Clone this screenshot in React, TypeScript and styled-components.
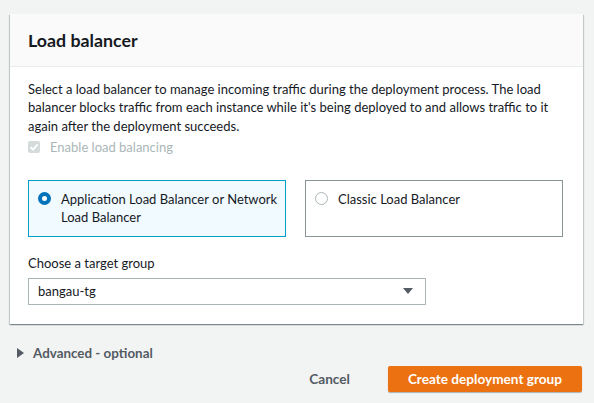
import React, { useState } from 'react';
import styled, { createGlobalStyle } from 'styled-components';

const GlobalStyle = createGlobalStyle`
  html, body {
    margin: 0;
    padding: 0;
    background: #f2f3f3;
    font-family: Lato, "Liberation Sans", Arial, sans-serif;
    font-size: 13px;
    color: #16191f;
  }
`;

const Page = styled.div`
  width: 594px;
  height: 403px;
  padding: 14px 0 0 10px;
  box-sizing: border-box;
  overflow: hidden;
`;

const Panel = styled.section`
  width: 573px;
  background: #ffffff;
  box-shadow: 0 1px 1px 0 rgba(0, 28, 36, 0.3), 1px 1px 1px 0 rgba(0, 28, 36, 0.15),
    -1px 1px 1px 0 rgba(0, 28, 36, 0.15);
`;

const PanelHeader = styled.header`
  height: 52px;
  display: flex;
  align-items: center;
  padding: 0 20px 0 18px;
  background: #fafafa;
  border-bottom: 1px solid #eaeded;
`;

const PanelTitle = styled.h2`
  margin: 0 0 1px;
  font-size: 17.8px;
  font-weight: 700;
  line-height: 22px;
  color: #16191f;
`;

const PanelBody = styled.div`
  padding: 13px 20px 19px 18px;
`;

const Description = styled.p`
  margin: 0;
  line-height: 18.3px;
`;

const CheckRow = styled.label`
  display: flex;
  align-items: center;
  gap: 10px;
  margin-top: 3px;
  height: 18px;
  color: #aab7b8;
`;

const CheckBox = styled.span`
  width: 12px;
  height: 12px;
  border-radius: 2px;
  background: #d5dbdb;
  display: flex;
  align-items: center;
  justify-content: center;
`;

const OptionGrid = styled.div`
  display: grid;
  grid-template-columns: 1fr 1fr;
  gap: 19px;
  margin-top: 24px;
`;

const OptionCard = styled.div<{ $selected: boolean }>`
  display: flex;
  align-items: flex-start;
  gap: 10px;
  min-height: 56px;
  box-sizing: border-box;
  padding: 9px 5px 10px 9px;
  border: 1px solid ${p => (p.$selected ? '#00a1c9' : '#879596')};
  background: ${p => (p.$selected ? '#f1faff' : '#ffffff')};
  cursor: pointer;
`;

const Radio = styled.span<{ $checked: boolean }>`
  flex: none;
  width: 13px;
  height: 13px;
  margin-top: 2px;
  border-radius: 50%;
  box-sizing: border-box;
  background: #ffffff;
  border: ${p => (p.$checked ? '4px solid #0073bb' : '1px solid #aab7b8')};
`;

const OptionLabel = styled.span`
  line-height: 18px;
  color: #16191f;
`;

const FieldLabel = styled.div`
  margin-top: 17px;
  line-height: 18px;
`;

const Select = styled.div`
  margin-top: 6px;
  width: 398px;
  height: 27px;
  box-sizing: border-box;
  border: 1px solid #aab7b8;
  display: flex;
  align-items: center;
  justify-content: space-between;
  padding: 0 12px 0 9px;
  background: #ffffff;
`;

const Caret = styled.span`
  width: 0;
  height: 0;
  border-left: 5px solid transparent;
  border-right: 5px solid transparent;
  border-top: 6px solid #545b64;
`;

const Expander = styled.div`
  display: flex;
  align-items: center;
  gap: 9px;
  margin: 20px 0 0 7px;
  font-size: 13.4px;
  font-weight: 700;
  color: #545b64;
  line-height: 18px;
`;

const ExpandIcon = styled.span`
  width: 0;
  height: 0;
  border-top: 5px solid transparent;
  border-bottom: 5px solid transparent;
  border-left: 7px solid #545b64;
`;

const Actions = styled.div`
  display: flex;
  justify-content: flex-end;
  align-items: center;
  width: 573px;
  margin-top: 4px;
`;

const Button = styled.button<{ $primary?: boolean }>`
  font-family: inherit;
  font-size: 13.6px;
  font-weight: 700;
  height: 26px;
  line-height: 18px;
  padding: 0 20px;
  border: none;
  border-radius: 2px;
  cursor: pointer;
  color: ${p => (p.$primary ? '#ffffff' : '#545b64')};
  background: ${p => (p.$primary ? '#ec7211' : 'transparent')};
  margin-left: ${p => (p.$primary ? '18px' : '0')};
  margin-right: ${p => (p.$primary ? '1px' : '0')};
  box-shadow: ${p => (p.$primary ? '0 1px 1px 0 rgba(0,28,36,0.3)' : 'none')};
`;

export default function App() {
  const [type, setType] = useState<'alb' | 'classic'>('alb');

  return (
    <Page>
      <GlobalStyle />
      <Panel>
        <PanelHeader>
          <PanelTitle>Load balancer</PanelTitle>
        </PanelHeader>
        <PanelBody>
          <Description>
            Select a load balancer to manage incoming traffic during the deployment process. The load
            balancer blocks traffic from each instance while it's being deployed to and allows traffic to it
            again after the deployment succeeds.
          </Description>
          <CheckRow>
            <CheckBox>
              <svg width="10" height="10" viewBox="0 0 10 10">
                <path d="M1.5 5.2 L4 7.6 L8.6 2.4" fill="none" stroke="#fff" strokeWidth="1.8" />
              </svg>
            </CheckBox>
            Enable load balancing
          </CheckRow>
          <OptionGrid>
            <OptionCard $selected={type === 'alb'} onClick={() => setType('alb')}>
              <Radio $checked={type === 'alb'} />
              <OptionLabel>Application Load Balancer or Network Load Balancer</OptionLabel>
            </OptionCard>
            <OptionCard $selected={type === 'classic'} onClick={() => setType('classic')}>
              <Radio $checked={type === 'classic'} />
              <OptionLabel>Classic Load Balancer</OptionLabel>
            </OptionCard>
          </OptionGrid>
          <FieldLabel>Choose a target group</FieldLabel>
          <Select>
            <span>bangau-tg</span>
            <Caret />
          </Select>
        </PanelBody>
      </Panel>
      <Expander>
        <ExpandIcon />
        Advanced - optional
      </Expander>
      <Actions>
        <Button>Cancel</Button>
        <Button $primary>Create deployment group</Button>
      </Actions>
    </Page>
  );
}
